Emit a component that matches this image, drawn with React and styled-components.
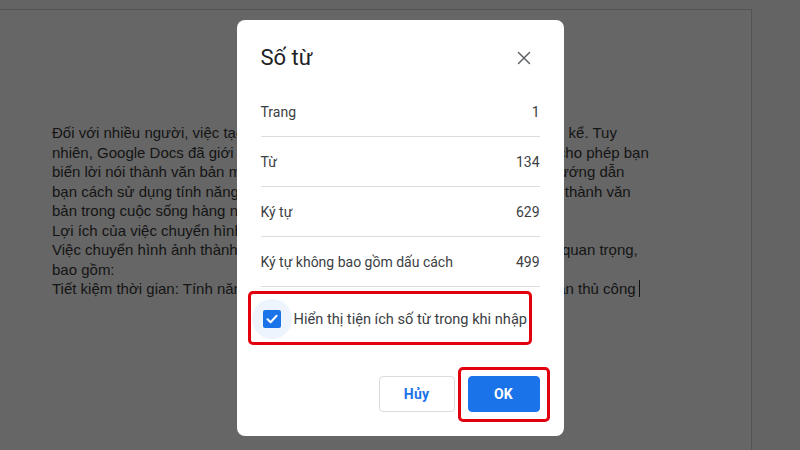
import React from "react";
import styled, { createGlobalStyle } from "styled-components";

const Global = createGlobalStyle`
  html, body { margin: 0; padding: 0; background: #666666; }
  body { width: 800px; height: 450px; overflow: hidden; }
  * { box-sizing: border-box; }
`;

const Canvas = styled.div`
  position: relative;
  width: 800px;
  height: 450px;
  background: #646464;
  overflow: hidden;
`;

const Page = styled.div`
  margin-top: 9px;
  width: 752px;
  height: 460px;
  background: #666666;
  border-top: 1px solid #545454;
  border-right: 1px solid #545454;
  padding: 113px 0 0 52px;
`;

const Line = styled.div`
  font-family: "Liberation Sans", Arial, sans-serif;
  font-size: 15px;
  line-height: 19.5px;
  color: #141414;
  white-space: nowrap;
`;

const Caret = styled.span`
  display: inline-block;
  width: 0;
  height: 17px;
  border-left: 1.5px solid #111;
  margin-left: 3px;
  vertical-align: -3px;
`;

const Backdrop = styled.div`
  position: absolute;
  inset: 0;
  display: flex;
  justify-content: center;
  align-items: flex-start;
  padding-top: 20px;
`;

const Dialog = styled.div`
  width: 327px;
  height: 416px;
  background: #ffffff;
  border-radius: 8px;
  padding: 24px;
  display: flex;
  flex-direction: column;
  font-family: Roboto, "Noto Sans", Arial, sans-serif;
`;

const Header = styled.div`
  display: flex;
  justify-content: space-between;
  align-items: center;
  height: 28px;
  margin-bottom: 15px;
`;

const Title = styled.h1`
  margin: 0;
  font-family: Roboto, "Open Sans", Arial, sans-serif;
  font-size: 22px;
  font-weight: 400;
  color: #202124;
  line-height: 28px;
`;

const CloseBtn = styled.button`
  border: none;
  background: none;
  padding: 0;
  width: 24px;
  height: 24px;
  margin-right: 4px;
  display: flex;
  align-items: center;
  justify-content: center;
`;

const StatRow = styled.div`
  display: flex;
  justify-content: space-between;
  align-items: center;
  height: 50px;
  padding-top: 1px;
  border-bottom: 1px solid #dadce0;
  font-size: 14px;
  color: #3c4043;
`;

const Highlight = styled.div`
  position: relative;
  &::after {
    content: "";
    position: absolute;
    top: ${(p) => p.$t}px;
    right: ${(p) => p.$r}px;
    bottom: ${(p) => p.$b}px;
    left: ${(p) => p.$l}px;
    border: 3px solid #e2000f;
    border-radius: 5px;
    pointer-events: none;
  }
`;

const CheckHighlight = styled(Highlight)`
  align-self: flex-start;
  margin: 12px 0 0 -9px;
`;

const CheckRow = styled.label`
  display: flex;
  align-items: center;
  height: 40px;
  font-size: 14.6px;
  color: #3c4043;
`;

const Halo = styled.span`
  width: 40px;
  height: 40px;
  border-radius: 50%;
  background: #eef4fe;
  display: flex;
  align-items: center;
  justify-content: center;
  margin-right: 2px;
`;

const Box = styled.span`
  width: 18px;
  height: 18px;
  border-radius: 2px;
  background: #1a73e8;
  display: flex;
  align-items: center;
  justify-content: center;
`;

const Actions = styled.div`
  margin-top: auto;
  display: flex;
  justify-content: flex-end;
  align-items: center;
  gap: 13px;
`;

const Button = styled.button`
  height: 36px;
  width: ${(p) => p.$w}px;
  border-radius: 4px;
  font-family: Roboto, Arial, sans-serif;
  font-size: 14px;
  font-weight: 700;
  letter-spacing: 0.2px;
  cursor: pointer;
  border: 1px solid ${(p) => (p.$primary ? "#1a73e8" : "#dadce0")};
  background: ${(p) => (p.$primary ? "#1a73e8" : "#ffffff")};
  color: ${(p) => (p.$primary ? "#ffffff" : "#1a73e8")};
`;

const lines = [
  "Đối với nhiều người, việc tạo văn bản trên bàn phím tốn nhiều thời gian đáng kể. Tuy",
  "nhiên, Google Docs đã giới thiệu tính năng nhập liệu bằng giọng nói tiện lợi cho phép bạn",
  "biến lời nói thành văn bản một cách vô cùng dễ dàng. Bài viết dưới đây sẽ hướng dẫn",
  "bạn cách sử dụng tính năng Nhập liệu bằng giọng nói, để chuyển hoá lời nói thành văn",
  "bản trong cuộc sống hàng ngày.",
  "Lợi ích của việc chuyển hình ảnh thành văn bản",
  "Việc chuyển hình ảnh thành văn bản trong Google Docs mang lại các lợi ích quan trọng,",
  "bao gồm:",
];

const stats = [
  ["Trang", "1"],
  ["Từ", "134"],
  ["Ký tự", "629"],
  ["Ký tự không bao gồm dấu cách", "499"],
];

export default function App() {
  return (
    <>
      <Global />
      <Canvas>
        <Page>
          {lines.map((l, i) => (
            <Line key={i}>{l}</Line>
          ))}
          <Line>
            Tiết kiệm thời gian: Tính năng này giúp bạn không cần phải ngồi nhập văn bản thủ công
            <Caret />
          </Line>
        </Page>
        <Backdrop>
          <Dialog role="dialog">
            <Header>
              <Title>Số từ</Title>
              <CloseBtn aria-label="Đóng">
                <svg width="14" height="14" viewBox="0 0 14 14">
                  <path d="M1.5 1.5 L12.5 12.5 M12.5 1.5 L1.5 12.5" stroke="#5f6368" strokeWidth="1.5" strokeLinecap="round" />
                </svg>
              </CloseBtn>
            </Header>
            {stats.map(([k, v]) => (
              <StatRow key={k}>
                <span>{k}</span>
                <span>{v}</span>
              </StatRow>
            ))}
            <CheckHighlight $t={-8} $r={-5} $b={-6} $l={-4}>
              <CheckRow>
                <Halo>
                  <Box>
                    <svg width="14" height="14" viewBox="0 0 14 14">
                      <path d="M2.5 7.3 L5.6 10.3 L11.6 3.8" fill="none" stroke="#ffffff" strokeWidth="2" strokeLinecap="round" strokeLinejoin="round" />
                    </svg>
                  </Box>
                </Halo>
                <span>Hiển thị tiện ích số từ trong khi nhập</span>
              </CheckRow>
            </CheckHighlight>
            <Actions>
              <Button $w={76}>Hủy</Button>
              <Highlight $t={-9} $r={-10} $b={-10} $l={-10}>
                <Button $w={72} $primary>OK</Button>
              </Highlight>
            </Actions>
          </Dialog>
        </Backdrop>
      </Canvas>
    </>
  );
}
